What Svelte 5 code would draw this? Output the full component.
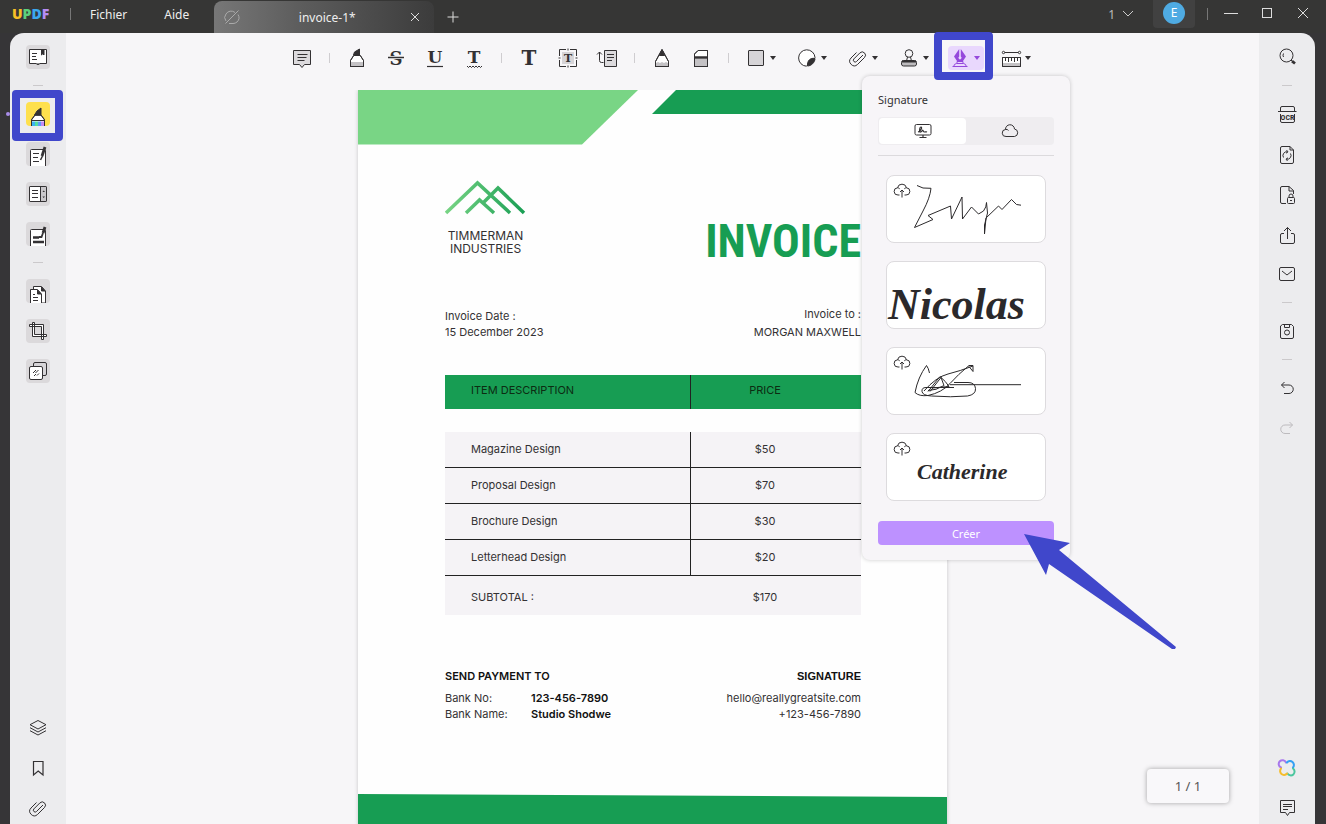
<script lang="ts">
	type Item = { icon: string; label: string; menu?: boolean; active?: boolean; muted?: boolean } | null;

	const clip =
		'<path d="M17 9l-6.500 6.500a1.800 1.800 0 0 1-2.600-2.600l6-6a3.200 3.200 0 0 1 4.600 4.600l-7 7a4.600 4.600 0 0 1-6.500-6.500l5.500-5.500"/>';
	const serif = 'font-family="DejaVu Serif, serif" font-weight="700" text-anchor="middle" fill="currentColor" stroke="none"';

	// All glyphs are drawn on a 24px grid
	const icons: Record<string, string> = {
		comment:
			'<path d="M3.500 4.500h17v14h-6l-2.500 3-2.500-3h-6z" fill="#dcdadd"/><path d="M7.500 8.500h10M7.500 11.500h9M7.500 14.500h7"/>',
		highlight:
			'<path d="M5.500 20.500v-6l3.200-5h6.600l3.200 5v6" fill="#fff"/><path d="M6 16h12v4.500H6z" fill="#c4c2c5" stroke="none"/><path d="M5.500 20.500v-6l3.200-5h6.600l3.200 5v6M5 20.500h14"/><path d="M8.500 9l1-3 5-3v6z" fill="currentColor"/>',
		strike: `<text x="12" y="19" font-size="18" ${serif}>S</text><path d="M3 11.500h18" stroke="#f8f6f8" stroke-width="3"/><path d="M4 11.500h16" stroke-width="1.500"/>`,
		underline: `<text x="12" y="17" font-size="17" ${serif}>U</text><path d="M4 20.500h16" stroke-width="1.200"/>`,
		squiggle: `<text x="12" y="17" font-size="17" ${serif}>T</text><path d="M5 20l1.500 1.500L8 20l1.500 1.500L11 20l1.500 1.500L14 20l1.500 1.500L17 20l1.500 1.500L20 20"/>`,
		text: `<text x="12" y="19" font-size="20" ${serif}>T</text>`,
		textbox: `<rect x="6" y="6" width="12" height="12" fill="#d6d4d7" stroke="none"/><path d="M3.500 10V3.500H10M14 3.500h6.500V10M20.500 14v6.500H14M10 20.500H3.500V14M12 2.500v2M12 19.500v2M2.500 12h2M19.500 12h2"/><text x="12" y="16" font-size="11" ${serif}>T</text>`,
		callout:
			'<path d="M9.500 4.500h12v16h-12z" fill="#dcdadd"/><path d="M12 8.500h7M12 11.500h7M12 14.500h5M8.500 16.500h-2a2 2 0 0 1-2-2V6M2 8.500L4.500 6 7 8.500"/>',
		pencil:
			'<path d="M5.500 20.500v-5l6.500-12 6.500 12v5" fill="#fff"/><path d="M6 17l2-1 2 1 2-1 2 1 2-1 2 1v3.500H6z" fill="#c4c2c5" stroke="none"/><path d="M5.500 21v-5.500l6.500-12 6.500 12V21M5 20.500h14"/><path d="M9.500 9.500L12 4l2.500 5.500z" fill="currentColor"/>',
		eraser:
			'<path d="M5.500 20.500V8l3.500-3.500h9.500v16z" fill="#fff"/><path d="M6 13h12v7.500H6z" fill="#c4c2c5" stroke="none"/><path d="M5.500 21V8L9 4.500h9.500V21M5 20.500h14"/><path d="M5.500 11.500h13" stroke-width="2.500"/>',
		shape: '<rect x="4.500" y="4.500" width="15" height="15" fill="#d6d4d7" rx=".5"/>',
		sticker:
			'<path d="M20 11.500a8.200 8.200 0 1 0-8.500 8.700z" fill="#fff"/><path d="M20 12.500c-4.500-1-8 2-7.500 7.500 3.500 0 7.500-3.500 7.500-7.500z" fill="currentColor"/>',
		clip,
		stamp:
			'<circle cx="12" cy="7.500" r="3.800"/><path d="M10.500 11l-1 4h5l-1-4"/><rect x="4.500" y="14.500" width="15" height="5.500" rx="2" fill="#bdbbbe"/><path d="M5 15.500h14" stroke-width="2"/>',
		pen: '<path d="M5.500 21q.5-3.500 3-3.500h7q2.500 0 3 3.500M4.500 20.500h15M9 15.500h6v2H9z"/><path d="M9 15l-3-4.500L11.200 3v7.500a1.500 1.500 0 1 0 1.600 0V3L18 10.500 15 15z" fill="currentColor" stroke="none"/>',
		ruler:
			'<path d="M3.500 11.500h18v9h-18z" fill="#fff"/><path d="M4 17h17v3H4z" fill="#c4c2c5" stroke="none"/><path d="M3.500 11.500h18v9h-18zM6.500 12v3M9.500 12v4M12.500 12v3M15.500 12v4M18.500 12v3M5 6.500h15"/><circle cx="4.500" cy="6.500" r="1.200" fill="#fff"/><circle cx="20.500" cy="6.500" r="1.200" fill="#fff"/>',

		book: '<path d="M3.500 4.500h17v14h-6.500l-2 1.200-2-1.200H3.500z" fill="#fff"/><path d="M6 8.500h5M6 11.500h4M6 14.500h5M12 18v1.500"/><path d="M15.500 5h2.500v5l-1.200-1.200L15.500 10z" fill="currentColor"/>',
		marker:
			'<path d="M5.500 24v-6.500l3.500-4.500h6l3.500 4.500V24z" fill="#fff"/><path d="M6 19.500h3V24H6z" fill="#3bb4f2" stroke="none"/><path d="M9 19.500h3V24H9z" fill="#52dca0" stroke="none"/><path d="M12 19.500h3V24h-3z" fill="#5b9cf8" stroke="none"/><path d="M15 19.500h3V24h-3z" fill="#c58af5" stroke="none"/><path d="M5.500 24v-6l3.500-5h6l3.500 5v6M5.500 18.500h13"/><path d="M8.500 13L11 9l4-3v7z" fill="currentColor"/>',
		edit: '<path d="M4.500 24V8.500a1 1 0 0 1 1-1h13a1 1 0 0 1 1 1V24" fill="#fff"/><path d="M7 11.500h6M7 15.500h5M7 19.500h6"/><path d="M19 5l-3 9" stroke-width="2.800"/><path d="M16.500 14l-2 4" stroke-width="1.600"/>',
		form: '<rect x="3.500" y="4.500" width="17" height="15" rx="1" fill="#fff"/><path d="M15 5h5v14h-5z" fill="#c9c7ca" stroke="none"/><rect x="3.500" y="4.500" width="17" height="15" rx="1"/><path d="M14.500 4.500v15M6 8.500h6M6 11.500h6M6 15.500h6"/><path d="M16.500 10l1.200-1.500L19 10zM16.500 14.500l1.200 1.500 1.300-1.500z" fill="currentColor" stroke="none"/>',
		redact:
			'<path d="M4.500 24V8.500a1 1 0 0 1 1-1h13a1 1 0 0 1 1 1V24" fill="#fff"/><path d="M7 15.500h6M7 20h11" stroke-width="2.500"/><path d="M19 5l-2 6" stroke-width="2.800"/><path d="M17 11l-1.500 4H13" stroke-width="1.800"/>',
		pages: '<path d="M7.500 10.500v-3h8l4 4.500v12H15" fill="#fff"/><path d="M4.500 24V10.500h7l4 4.500v9" fill="#fff"/><path d="M11.500 11v4h3.500zM15.500 8v4H19z" fill="currentColor"/><path d="M7 15.500h2M7 18.500h5M7 21.500h5"/>',
		crop: '<path d="M3.500 5.500h14v15h-2v-13h-12zM20.500 17.500h-14v-14h2v12h12z" fill="#fff"/>',
		watermark:
			'<rect x="7.500" y="3.500" width="13" height="13" rx="1.500" fill="#d6d4d7"/><rect x="3.500" y="7.500" width="13" height="13" rx="1.500" fill="#fff"/><path d="M7 14l3-3M9.500 14l3-3M8 17l2-2M11 16.500l2-2"/>',
		layers: '<path d="M12 4.500l8 4.200-8 4.300-8-4.300zM4 11.700l8 4.300 8-4.300M4 14.700L12 19l8-4.300"/>',
		bookmark: '<path d="M7.500 5.500h9.500v13.500l-4.800-4-4.700 4z" stroke-width="1.200"/>',

		search:
			'<circle cx="11.500" cy="10.500" r="6.500"/><path d="M8.500 12a3.500 3.500 0 0 1 0-3.500M16 15l1.500 1.500"/><path d="M17 16.200l3 2.300" stroke-width="2.800"/>',
		ocr: '<path d="M3 9.500h18.500M5.500 9V6a1.500 1.500 0 0 1 1.500-1.500h11A1.500 1.500 0 0 1 19.500 6v3M5.500 12v7A1.500 1.500 0 0 0 7 20.500h11a1.500 1.500 0 0 0 1.500-1.500v-7"/><text x="12.500" y="18" font-family="Liberation Sans Narrow, Roboto Condensed, sans-serif" font-weight="700" font-size="8" text-anchor="middle" fill="currentColor" stroke="none">OCR</text>',
		convert:
			'<path d="M7 4.500h8l3.500 3.500v12a1.500 1.500 0 0 1-1.500 1.500H7A1.500 1.500 0 0 1 5.500 20V6A1.500 1.500 0 0 1 7 4.500zM15 4.500V8h3.500M8.500 15.500a3.800 3.800 0 0 1 4-5.700M11.500 8l1.500 1.900-2 1.300M15.500 11.500a3.800 3.800 0 0 1-4 5.700M12.500 19L11 17.100l2-1.300"/>',
		protect:
			'<path d="M11 21.500H7A1.500 1.500 0 0 1 5.500 20V6A1.500 1.500 0 0 1 7 4.500h7l4.500 4V12M14 4.500V9h4.500"/><rect x="12.500" y="15.500" width="7" height="6" rx="1"/><path d="M14 15.500V14a2 2 0 0 1 4 0v1.500M15 18.500h2"/>',
		share: '<path d="M9 11.500H7A1.500 1.500 0 0 0 5.500 13v7A1.500 1.500 0 0 0 7 21.500h11a1.500 1.500 0 0 0 1.500-1.500v-7a1.500 1.500 0 0 0-1.500-1.500h-2M12.500 17V5.500M9 9l3.500-3.500L16 9"/>',
		mail: '<rect x="4.500" y="5.500" width="15" height="13" rx="1.500"/><path d="M7 9l5 4 5-4"/>',
		save: '<path d="M7.500 5.500h9l2 2v10.500a1.500 1.500 0 0 1-1.500 1.500H7A1.500 1.500 0 0 1 5.500 18V7z"/><path d="M9.500 5.500v3h5v-3"/><circle cx="12" cy="13.500" r="2.500"/>',
		undo: '<path d="M9.500 6L6.500 9l3 3M6.500 9H14a4 4 0 0 1 0 8.500H9"/>',
		redo: '<path d="M14.500 6l3 3-3 3M17.500 9H10a4 4 0 0 0 0 8.500h5"/>',
		notes: '<path d="M5.500 4.500h14v12h-5l-2 3-2-3h-5z"/><path d="M8 8.500h9M8 10.500h9M8 13.500h5"/>',
		assistant:
			'<g stroke-width="2" stroke-linecap="round"><path d="M11 6.500A3.800 3.800 0 1 0 6 11.500" stroke="#a878ec"/><path d="M12 6.500A3.800 3.800 0 1 1 18 11.500" stroke="#35a0f4"/><path d="M18 12.500A3.800 3.800 0 1 1 12.500 17.500" stroke="#4bc69e"/><path d="M6 12.500A3.800 3.800 0 1 0 12 17.500" stroke="#f5bd2c"/></g>',

		screen:
			'<rect x="4" y="5.500" width="16" height="10.500" rx="1.500"/><path d="M12 16v3M8.500 18.500h7M7 13c3-.5 4.500-5 3-5s-2 5.500-.5 5 2-2.500 2.500-1.500.5 1.500 1.500 1.500 1.500-.5 2.500 0" stroke-width="1.200"/>',
		cloud: '<path d="M8 17.500a3.500 3.500 0 0 1-.5-7 4.500 4.500 0 0 1 9-.5 3.800 3.800 0 0 1 0 7.500zM7.500 10.500q2-.5 3 1"/>',
		upload:
			'<path d="M9.500 17H8a3.600 3.600 0 0 1-.5-7.200 4.600 4.600 0 0 1 9 0A3.600 3.600 0 0 1 16 17h-1.500M12 19.500v-7M10 14l2-2 2 2M7.500 9.800q1.500 0 2.200 1M16.500 9.800q-1.500 0-2.200 1"/>',
		tag: '<path d="M6 16a5.500 5.500 0 0 1 0-7 6 6 0 0 1 9-1.500M18 9.500a6 6 0 0 1-1 7.500 6 6 0 0 1-4 1.500H9M5.500 18.500l13-13"/>'
	};

	const tools: Item[] = [
		{ icon: 'comment', label: 'Note' },
		null,
		{ icon: 'highlight', label: 'Surligner' },
		{ icon: 'strike', label: 'Barrer' },
		{ icon: 'underline', label: 'Souligner' },
		{ icon: 'squiggle', label: 'Ligne ondulée' },
		null,
		{ icon: 'text', label: 'Texte' },
		{ icon: 'textbox', label: 'Zone de texte' },
		{ icon: 'callout', label: 'Légende' },
		null,
		{ icon: 'pencil', label: 'Crayon' },
		{ icon: 'eraser', label: 'Gomme' },
		null,
		{ icon: 'shape', label: 'Formes', menu: true },
		{ icon: 'sticker', label: 'Autocollant', menu: true },
		{ icon: 'clip', label: 'Pièce jointe', menu: true },
		{ icon: 'stamp', label: 'Tampon', menu: true },
		{ icon: 'pen', label: 'Signature', menu: true, active: true },
		{ icon: 'ruler', label: 'Mesurer', menu: true }
	];

	const modes: Item[] = [
		{ icon: 'book', label: 'Lecteur' },
		null,
		{ icon: 'marker', label: 'Commentaire', active: true },
		{ icon: 'edit', label: 'Modifier' },
		{ icon: 'form', label: 'Formulaire' },
		{ icon: 'redact', label: 'Caviarder' },
		null,
		{ icon: 'pages', label: 'Pages' },
		{ icon: 'crop', label: 'Rogner' },
		{ icon: 'watermark', label: 'Filigrane' }
	];

	const panels: Item[] = [
		{ icon: 'layers', label: 'Calques' },
		{ icon: 'bookmark', label: 'Signets' },
		{ icon: 'clip', label: 'Pièces jointes' }
	];

	const actions: Item[] = [
		{ icon: 'search', label: 'Rechercher' },
		null,
		{ icon: 'ocr', label: 'Reconnaissance' },
		{ icon: 'convert', label: 'Convertir' },
		{ icon: 'protect', label: 'Protéger' },
		{ icon: 'share', label: 'Partager' },
		{ icon: 'mail', label: 'Envoyer' },
		null,
		{ icon: 'save', label: 'Enregistrer' },
		null,
		{ icon: 'undo', label: 'Annuler' },
		{ icon: 'redo', label: 'Rétablir', muted: true }
	];

	const helpers: Item[] = [
		{ icon: 'assistant', label: 'Assistant' },
		{ icon: 'notes', label: 'Commentaires' }
	];

	const signatures = [
		{
			cloud: true,
			label: 'Signature 1',
			path: 'M30 9.500l6 2.500 8 .3Q43 22 36 35L27.500 51.500 46 43.500 41 39.500 63.500 30l1 13L75 21l.5 22 9-12 7 7 5-3q3-4 3-8.500l1 10.500-3 12v9l1.500-16 12.500-12 3.500 3.500L124.500 23.500l5 5 4.500.7'
		},
		{ cloud: false, label: 'Signature 2', name: 'Nicolas', big: true },
		{
			cloud: true,
			label: 'Signature 3',
			path: 'M42.500 25q-1-5-3-7.500Q31 29 28 44.500q4 4 13 3 14-3 22-12 8-9 19-18h4v6l-4-5M37 43q12-14 24-17t25-8M63 36.700h71M67 34.500h14q7 0 7.500 6t-8 7.500q-16 1.500-36 0-9-.5-9.500-4.500t4-4h28M41 43.500l12-15q6 5 9 10L45 40M43 43.500l11-14 3 8q-8 5-16 5'
		},
		{ cloud: true, label: 'Signature 4', name: 'Catherine' }
	];

	const lines = [
		['Magazine Design', '$50'],
		['Proposal Design', '$70'],
		['Brochure Design', '$30'],
		['Letterhead Design', '$20']
	];

	let source = $state('local');
</script>

{#snippet glyph(name: string)}
	<svg class="icon" viewBox="0 0 24 24" fill="none" stroke="currentColor" aria-hidden="true">
		{@html icons[name]}
	</svg>
{/snippet}

{#snippet rail(items: Item[], tiles: boolean)}
	{#each items as item}
		{#if item}
			<button class="tool" class:tile={tiles} class:current={item.active} class:muted={item.muted} aria-label={item.label}>
				{@render glyph(item.icon)}
				{#if item.active}
					<span class="dot"></span>
					<span class="focus focus-mode"></span>
				{/if}
			</button>
		{:else}
			<span class="dash"></span>
		{/if}
	{/each}
{/snippet}

<div class="app">
	<header>
		<span class="logo"><b class="u">U</b><b class="p">P</b><b class="d">D</b><b class="f">F</b></span>
		<span class="bar"></span>
		<nav>
			<button>Fichier</button>
			<button>Aide</button>
		</nav>
		<div class="tab">
			{@render glyph('tag')}
			<span>invoice-1*</span>
			<button aria-label="Fermer l'onglet">
				<svg viewBox="0 0 10 10" width="10" height="10" stroke="#ddd"><path d="M1 1l8 8M9 1L1 9" /></svg>
			</button>
		</div>
		<button class="plus" aria-label="Nouvel onglet">
			<svg viewBox="0 0 12 12" width="12" height="12" stroke="#ddd"><path d="M6 .5v11M.5 6h11" /></svg>
		</button>
		<div class="window">
			<button class="count">
				1
				<svg viewBox="0 0 12 8" width="12" height="8" fill="none" stroke="#ccc"><path d="M1 1l5 5 5-5" /></svg>
			</button>
			<button class="account"><span>E</span></button>
			<span class="bar"></span>
			<button aria-label="Réduire">
				<svg viewBox="0 0 14 14" width="14" height="14" stroke="#ddd"><path d="M0 6.500h14" /></svg>
			</button>
			<button aria-label="Agrandir">
				<svg viewBox="0 0 14 14" width="14" height="14" fill="none" stroke="#ddd"><rect x="2.500" y="1.500" width="9" height="9" /></svg>
			</button>
			<button aria-label="Fermer">
				<svg viewBox="0 0 14 14" width="14" height="14" stroke="#ddd"><path d="M2 1l10 10M12 1L2 11" /></svg>
			</button>
		</div>
	</header>

	<div class="shell">
		<aside class="left">
			{@render rail(modes, true)}
			<span class="spacer"></span>
			{@render rail(panels, false)}
		</aside>

		<main>
			<div class="toolbar">
				{#each tools as tool}
					{#if !tool}
						<span class="divider"></span>
					{:else}
						<div class="slot">
							<button class="tool" class:menu={tool.menu} class:active={tool.active} aria-label={tool.label}>
								{@render glyph(tool.icon)}
								{#if tool.menu}
									<svg class="caret" viewBox="0 0 6 4" aria-hidden="true"><path d="M0 0h6L3 4z" fill="currentColor" /></svg>
								{/if}
							</button>
							{#if tool.active}
								<section class="popup">
									<h2>Signature</h2>
									<div class="switch">
										<button class:on={source === 'local'} aria-label="Local" onclick={() => (source = 'local')}>
											{@render glyph('screen')}
										</button>
										<button class:on={source === 'cloud'} aria-label="Cloud" onclick={() => (source = 'cloud')}>
											{@render glyph('cloud')}
										</button>
									</div>
									<hr />
									<div class="cards">
										{#each signatures as sig}
											<button class="card" aria-label={sig.label}>
												{#if sig.path}
													<svg class="scribble" viewBox="0 0 158 68" fill="none" stroke="#2b292b" stroke-linejoin="round">
														<path d={sig.path} />
													</svg>
												{:else}
													<span class="script" class:big={sig.big}>{sig.name}</span>
												{/if}
												{#if sig.cloud}
													<span class="sync">{@render glyph('upload')}</span>
												{/if}
											</button>
										{/each}
									</div>
									<button class="create">Créer</button>
									<svg class="arrow" viewBox="0 0 154 116" width="154" height="116" aria-hidden="true">
										<path d="M0 0l46 9-11 7 117 97-1 2h-3L25 30l-3 11z" fill="#4047cb" />
									</svg>
								</section>
								<span class="focus focus-tool"></span>
							{/if}
						</div>
					{/if}
				{/each}
			</div>

			<div class="canvas">
				<article class="page">
					<svg class="banner" viewBox="0 0 589 55" aria-hidden="true">
						<path d="M0 0h280l-56 54.500H0z" fill="#79d585" />
						<path d="M318 0h271v24H294z" fill="#179d53" />
					</svg>
					<div class="body">
						<div class="row">
							<div class="brand">
								<svg viewBox="0 0 81 35" width="81" height="35" fill="none" stroke="url(#peak)" stroke-width="3.500" aria-hidden="true">
									<defs>
										<linearGradient id="peak" x1="0" x2="81" y1="0" y2="0" gradientUnits="userSpaceOnUse">
											<stop offset="0" stop-color="#79d585" />
											<stop offset="1" stop-color="#179d53" />
										</linearGradient>
									</defs>
									<path d="M1 33L32.500 3 65 33M37 24L53 8l26 25M21 33l13.500-13L49 33" />
								</svg>
								<p>TIMMERMAN<br />INDUSTRIES</p>
							</div>
							<h1>INVOICE</h1>
						</div>
						<div class="row meta">
							<p>Invoice Date :<br />15 December 2023</p>
							<div class="to">
								<p>Invoice to :</p>
								<p>MORGAN MAXWELL</p>
							</div>
						</div>
						<table>
							<thead>
								<tr><th>ITEM DESCRIPTION</th><th>PRICE</th></tr>
							</thead>
							<tbody>
								{#each lines as [name, price]}
									<tr><td>{name}</td><td>{price}</td></tr>
								{/each}
								<tr class="total"><td>SUBTOTAL :</td><td>$170</td></tr>
							</tbody>
						</table>
						<div class="row payment">
							<div>
								<h3>SEND PAYMENT TO</h3>
								<dl>
									<dt>Bank No:</dt>
									<dd>123-456-7890</dd>
									<dt>Bank Name:</dt>
									<dd>Studio Shodwe</dd>
								</dl>
							</div>
							<div class="contact">
								<h3>SIGNATURE</h3>
								<p>hello@reallygreatsite.com<br />+123-456-7890</p>
							</div>
						</div>
					</div>
					<div class="foot"></div>
				</article>
			</div>
			<div class="pager">1 / 1</div>
		</main>

		<aside class="right">
			{@render rail(actions, false)}
			<span class="spacer"></span>
			{@render rail(helpers, false)}
		</aside>
	</div>
</div>

<style>
	:global(body) {
		background: #363537;
		font-family: 'Noto Sans', sans-serif;
		font-size: 12px;
		color: #333133;
	}

	button {
		border: 0;
		padding: 0;
		background: none;
		font: inherit;
		color: inherit;
	}

	p,
	h1,
	h2,
	h3,
	dl,
	dd {
		margin: 0;
	}

	svg {
		display: block;
	}

	.app {
		height: 100vh;
		display: flex;
		flex-direction: column;
		overflow: hidden;
	}

	header {
		display: flex;
		height: 33px;
		flex: none;
		color: #eee;
		background: #363635;
	}

	header > .bar,
	nav,
	.logo {
		margin-bottom: 5px;
	}

	.logo {
		margin-left: 12px;
		width: 40px;
		font: 900 14px/27px 'Open Sans', sans-serif;
	}

	.u {
		color: #f6c026;
	}

	.p {
		color: #5bcf7c;
	}

	.d {
		color: #3ba7ee;
	}

	.f {
		color: #b68cf3;
	}

	.bar {
		width: 1px;
		height: 12px;
		align-self: center;
		background: #777;
	}

	header > .bar {
		margin-left: 18px;
	}

	nav {
		display: flex;
		gap: 37px;
		padding: 0 25px 0 19px;
	}

	.tab {
		display: flex;
		align-items: center;
		width: 220px;
		box-sizing: border-box;
		padding: 0 14px 0 6px;
		margin-top: 1px;
		border-radius: 8px 8px 0 0;
		background: linear-gradient(90deg, #777, #5c5c5c 40%, #3c3c3c);
	}

	.tab .icon {
		color: #aaa;
	}

	.tab span {
		flex: 1;
		text-align: center;
	}

	.plus {
		margin-left: 13px;
	}

	.window {
		margin: 0 16px 5px auto;
		display: flex;
		align-items: center;
		gap: 22px;
	}

	.count {
		display: flex;
		align-items: center;
		gap: 7px;
		color: #bbb;
		margin-right: -3px;
	}

	.account {
		width: 42px;
		height: 28px;
		background: #414141;
		border-radius: 0 0 4px 4px;
		margin-right: -10px;
	}

	.account span {
		display: block;
		width: 22px;
		margin: 0 auto 2px;
		border-radius: 50%;
		line-height: 22px;
		background: #4fabe3;
		color: #fff;
	}

	.window .bar {
		margin-right: -6px;
	}

	.shell {
		flex: 1;
		min-height: 0;
		display: flex;
		margin: 0 11px 0 10px;
	}

	aside {
		width: 56px;
		flex: none;
		box-sizing: border-box;
		padding: 12px 0 4px;
		display: flex;
		flex-direction: column;
		align-items: center;
		gap: 16px;
		background: #ececee;
	}

	.left {
		border-radius: 14px 0 0 0;
	}

	.right {
		border-radius: 0 14px 0 0;
	}

	.spacer {
		flex: 1;
		margin-top: -16px;
	}

	.dash {
		width: 10px;
		height: 1px;
		background: #cbc9cb;
	}

	.tool {
		position: relative;
		width: 24px;
		height: 24px;
		flex: none;
		display: flex;
		align-items: center;
	}

	.icon {
		width: 24px;
		height: 24px;
		flex: none;
	}

	.tile {
		background: #dbd9db;
		border-radius: 4px;
	}

	.current {
		background: #fee04d;
	}

	.muted {
		color: #bdbbbe;
	}

	.focus {
		position: absolute;
		border: 8px solid #4047cb;
		border-radius: 4px;
		pointer-events: none;
	}

	.focus-mode {
		inset: -12px -13px -15px -14px;
	}

	.focus-tool {
		inset: -14px -9px -10px -14px;
		z-index: 3;
	}

	.dot {
		position: absolute;
		left: -20px;
		top: 10px;
		width: 4px;
		height: 4px;
		border-radius: 50%;
		background: #a98de8;
	}

	main {
		flex: 1;
		min-width: 0;
		position: relative;
		display: flex;
		flex-direction: column;
		background: #f7f6f8;
	}

	.toolbar {
		display: flex;
		justify-content: center;
		align-items: center;
		gap: 15px;
		padding: 13px 0 20px;
	}

	.divider {
		width: 1px;
		height: 10px;
		background: #cfcdd0;
	}

	.slot {
		position: relative;
	}

	.menu {
		width: 36px;
	}

	.caret {
		width: 6px;
		height: 4px;
		margin-left: 2px;
	}

	.active {
		color: #9548dc;
		background: #e9d8fd;
		border-radius: 4px;
	}

	.popup {
		position: absolute;
		z-index: 2;
		top: 30px;
		left: 50%;
		width: 208px;
		margin-left: -104px;
		box-sizing: border-box;
		padding: 16px 16px 15px;
		border-radius: 8px;
		background: #f7f5f8;
		box-shadow: 0 0 4px rgba(0, 0, 0, 0.2);
	}

	h2 {
		font-size: 11px;
		line-height: 16px;
		font-weight: 400;
	}

	.switch {
		display: flex;
		height: 28px;
		box-sizing: border-box;
		padding: 1px;
		margin-top: 9px;
		border-radius: 4px;
		background: #efedf0;
	}

	.switch button {
		flex: 1;
		display: flex;
		align-items: center;
		justify-content: center;
		border-radius: 4px;
	}

	.switch .on {
		background: #fff;
	}

	hr {
		border: 0;
		height: 1px;
		margin: 10px 0 19px;
		background: #dcdadd;
	}

	.cards {
		display: flex;
		flex-direction: column;
		gap: 18px;
		padding: 0 8px;
	}

	.card {
		position: relative;
		height: 68px;
		border-radius: 8px;
		background: #fff;
		box-sizing: border-box;
		border: 1px solid #dddbde;
		overflow: hidden;
		text-align: left;
	}

	.scribble {
		width: 100%;
		height: 68px;
	}

	.sync {
		position: absolute;
		top: 2px;
		left: 3px;
	}

	.script {
		display: block;
		padding: 10px 0 0 30px;
		font: italic 700 22px/28px 'Brush Script MT', 'Liberation Serif', serif;
		color: #2b292b;
	}

	.script.big {
		padding: 18px 0 0 1px;
		font-size: 44px;
		line-height: 50px;
	}

	.create {
		width: 100%;
		height: 24px;
		margin-top: 20px;
		border-radius: 4px;
		background: #bd91ff;
		color: #fff;
		font-size: 11px;
	}

	.arrow {
		position: absolute;
		left: 162px;
		top: 458px;
	}

	.canvas {
		flex: 1;
		min-height: 0;
		overflow: hidden;
		padding-right: 20px;
	}

	.page {
		max-width: 589px;
		margin: 0 auto;
		background: #fefefe;
		box-shadow: 0 0 4px rgba(0, 0, 0, 0.2);
		font: 11px/16px Inter, sans-serif;
	}

	.banner {
		width: 100%;
	}

	.body {
		padding: 35px 86px 72px 87px;
	}

	.row {
		display: flex;
		justify-content: space-between;
	}

	.brand p {
		margin-top: 14px;
		font-size: 12px;
		line-height: 13px;
		text-align: center;
	}

	h1 {
		margin-top: 37px;
		font: 700 46px/48px 'Liberation Sans Narrow', 'Arial Narrow', 'Roboto Condensed', 'Liberation Sans', sans-serif;
		color: #179d53;
	}

	.meta {
		margin-top: 41px;
		align-items: flex-end;
	}

	.to {
		display: flex;
		flex-direction: column;
		gap: 2px;
		text-align: right;
	}

	table {
		width: 100%;
		margin-top: 35px;
		border-spacing: 0;
		table-layout: fixed;
	}

	th,
	td {
		box-sizing: border-box;
		height: 36px;
		padding: 0 22px 2px 0;
		font-weight: 400;
	}

	th {
		height: 34px;
		padding-bottom: 4px;
		background: #179d53;
		color: #0c2c12;
	}

	th:first-child,
	td:first-child {
		width: 246px;
		padding-left: 26px;
		text-align: left;
		border-right: 1px solid #222;
	}

	td {
		background: #f5f3f6;
		border-bottom: 1px solid #222;
		text-align: center;
	}

	tbody::before {
		content: '';
		display: table-row;
		height: 23px;
	}

	.total td {
		height: 39px;
		border-color: transparent;
		padding-top: 6px;
	}

	.payment {
		margin-top: 53px;
	}

	h3 {
		font-size: 11px;
		font-weight: 600;
		color: #111;
		margin-bottom: 6px;
	}

	dl {
		display: grid;
		grid-template-columns: 86px auto;
	}

	dd {
		font-weight: 600;
		color: #111;
	}

	.contact {
		text-align: right;
	}

	.contact h3 {
		font-family: 'Liberation Sans', sans-serif;
		font-weight: 700;
	}

	.foot {
		height: 129px;
		background: #179d53;
		clip-path: polygon(0 0, 100% 3px, 100% 100%, 0 100%);
	}

	.pager {
		position: absolute;
		right: 30px;
		bottom: 21px;
		width: 82px;
		font-size: 13px;
		line-height: 34px;
		text-align: center;
		border-radius: 4px;
		background: #f9f8fa;
		box-shadow: 0 0 5px rgba(0, 0, 0, 0.35);
		color: #555;
	}
</style>
